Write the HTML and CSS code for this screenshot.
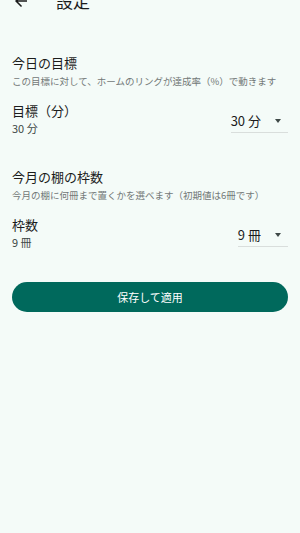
FILE: index.html
```html
<!DOCTYPE html>
<html>
<head lang="ja">
    <meta charset="UTF-8">
    <title>設定</title>
    <link rel="stylesheet" href="styles.css">
</head>
<body>
<header class="topbar">
    <svg class="back" width="18" height="18" viewBox="0 0 24 24">
        <path d="M20 11H7.83l5.59-5.59L12 4l-8 8 8 8 1.41-1.41L7.83 13H20v-2z" fill="#1b1c1c"/>
    </svg>
    <h1>設定</h1>
</header>
<main class="content">
    <section class="group first">
        <h2>今日の目標</h2>
        <p class="hint">この目標に対して、ホームのリングが達成率（%）で動きます</p>
        <div class="row">
            <div class="field">
                <div class="label">目標（分）</div>
                <div class="value">30 分</div>
            </div>
            <div class="select">
                <span>30 分</span>
                <em class="caret"></em>
            </div>
        </div>
    </section>
    <section class="group">
        <h2>今月の棚の枠数</h2>
        <p class="hint">今月の棚に何冊まで置くかを選べます（初期値は6冊です）</p>
        <div class="row">
            <div class="field">
                <div class="label">枠数</div>
                <div class="value">9 冊</div>
            </div>
            <div class="select">
                <span>9 冊</span>
                <em class="caret"></em>
            </div>
        </div>
    </section>
    <button class="save">保存して適用</button>
</main>
</body>
</html>
```

FILE: styles.css
```css
* {
    margin: 0;
    padding: 0;
    box-sizing: border-box;
}

body {
    background: #f4fbf8;
    color: #1b1c1c;
    font-family: "Noto Sans CJK JP", "Noto Sans", sans-serif;
}

.topbar {
    display: flex;
    align-items: center;
    height: 26px;
    margin-top: -12px;
    padding-left: 12px;
}

.topbar .back {
    display: block;
}

.topbar h1 {
    font-size: 17px;
    font-weight: 400;
    margin-left: 26px;
    line-height: 26px;
}

.content {
    padding: 0 12px;
}

.group {
    margin-top: 31px;
}

.group.first {
    margin-top: 39px;
}

.group h2 {
    font-size: 13px;
    font-weight: 400;
    line-height: 20px;
}

.hint {
    font-size: 9.5px;
    line-height: 16px;
    color: #727877;
    white-space: nowrap;
}

.row {
    display: flex;
    justify-content: space-between;
    margin-top: 13px;
}

.label {
    font-size: 13px;
    line-height: 18px;
}

.value {
    font-size: 11px;
    line-height: 16px;
    color: #3f4947;
}

.select {
    display: flex;
    align-items: center;
    gap: 14px;
    align-self: flex-end;
    margin-bottom: 3px;
    padding-right: 7px;
    padding-bottom: 1px;
    border-bottom: 1px solid #d9dedc;
    font-size: 13px;
    line-height: 20px;
}

.caret {
    width: 0;
    height: 0;
    border-left: 3px solid transparent;
    border-right: 3px solid transparent;
    border-top: 4px solid #3f4947;
}

.save {
    display: block;
    width: 100%;
    height: 30px;
    margin-top: 32px;
    border: none;
    border-radius: 15px;
    background: #00695c;
    color: #ffffff;
    font-family: "Noto Sans CJK JP", "Noto Sans", sans-serif;
    font-size: 11px;
}
```
